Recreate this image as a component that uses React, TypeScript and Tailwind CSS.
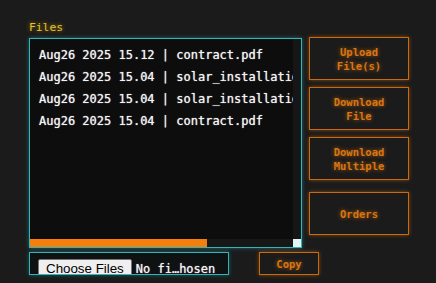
import React from 'react';

const files = [
  'Aug26 2025 15.12 | contract.pdf',
  'Aug26 2025 15.04 | solar_installation_quote.pdf',
  'Aug26 2025 15.04 | solar_installation_quote.pdf',
  'Aug26 2025 15.04 | contract.pdf',
];

const mono = "font-['DejaVu_Sans_Mono',monospace]";

function OrangeButton({ lines, className }: { lines: string[]; className?: string }) {
  return (
    <button
      className={`flex flex-col items-center justify-center border border-[#c96a10] bg-[#1b1b1b] text-[10.5px] font-bold leading-[14px] text-[#d87614] shadow-[0_0_4px_rgba(255,130,0,0.45)] [text-shadow:0_0_4px_rgba(255,130,0,0.6)] ${mono} ${className ?? ''}`}
    >
      {lines.map((l) => (
        <span key={l}>{l}</span>
      ))}
    </button>
  );
}

export default function App() {
  return (
    <div className={`h-[283px] w-[436px] overflow-hidden bg-[#1b1b1b] ${mono}`}>
      <div className="pl-[29px] pt-[21px]">
        <div className="text-[11.3px] leading-[14px] text-[#e8c22c] [text-shadow:0_0_4px_rgba(255,200,0,0.6)]">
          Files
        </div>

        <div className="mt-[2px] flex items-start">
          {/* file list panel */}
          <div className="mt-[1px] flex h-[210px] w-[273px] flex-col border border-[#33b4b8] bg-[#0d0d0d] shadow-[0_0_4px_rgba(40,200,210,0.45)]">
            <div className="flex min-h-0 flex-1">
              <div className="flex-1 overflow-hidden whitespace-nowrap pl-[9px] pt-[5px] text-[12px] leading-[22px] text-[#f4f4f4] [text-shadow:0_0_1px_rgba(255,255,255,0.8)]">
                {files.map((f, i) => (
                  <div key={i}>{f}</div>
                ))}
              </div>
              <div className="w-[8px] bg-[#161616]" />
            </div>
            <div className="flex h-[8px]">
              <div className="w-[177px] bg-[#f57f0c]" />
              <div className="flex-1 bg-[#171717]" />
              <div className="w-[8px] bg-[#e4f4f4]" />
            </div>
          </div>

          {/* action buttons */}
          <div className="ml-[7px] flex w-[100px] flex-col">
            <OrangeButton lines={['Upload', 'File(s)']} className="h-[43px]" />
            <OrangeButton lines={['Download', 'File']} className="mt-[7px] h-[43px]" />
            <OrangeButton lines={['Download', 'Multiple']} className="mt-[7px] h-[43px]" />
            <OrangeButton lines={['Orders']} className="mt-[12px] h-[43px]" />
          </div>
        </div>

        <div className="mt-[4px] flex items-start">
          <div className="flex h-[23px] w-[200px] items-start overflow-hidden border border-[#33b4b8] bg-[#0e1213] pl-[8px] pt-[6px] shadow-[0_0_4px_rgba(40,200,210,0.4)]">
            <span className="shrink-0 rounded-[2px] border border-[#767676] bg-[#efefef] px-[7px] py-[1px] font-['Liberation_Sans',Arial,sans-serif] text-[13.33px] leading-[16px] text-black">
              Choose Files
            </span>
            <span className="ml-[4px] whitespace-nowrap pt-[2px] text-[12px] leading-[16px] text-[#f4f4f4] [text-shadow:0_0_1px_rgba(255,255,255,0.8)]">
              No fi…hosen
            </span>
          </div>
          <OrangeButton lines={['Copy']} className="ml-[30px] h-[23px] w-[60px]" />
        </div>
      </div>
    </div>
  );
}
